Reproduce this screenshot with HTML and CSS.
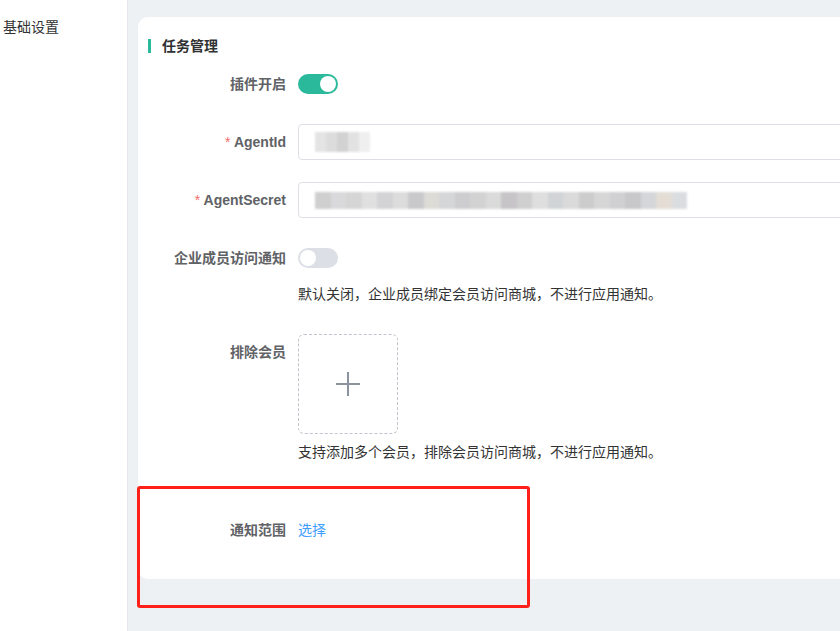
FILE: index.html
```html
<!DOCTYPE html>
<html lang="zh">
<head>
<meta charset="utf-8">
<title>任务管理</title>
<link rel="stylesheet" href="styles.css">
</head>
<body>
<div class="layout">
  <aside class="sidebar">
    <div class="nav-item">基础设置</div>
  </aside>
  <main class="main">
    <section class="card">
      <h2 class="card-title">任务管理</h2>
      <div class="form">
        <div class="form-item">
          <label class="form-label">插件开启</label>
          <div class="form-content">
            <span class="switch is-on"><span class="knob"></span></span>
          </div>
        </div>
        <div class="form-item">
          <label class="form-label"><span class="req">*</span> AgentId</label>
          <div class="form-content">
            <div class="input">
              <span class="redact redact-short">
                <i style="background:#e4e4e4"></i><i style="background:#dcdcdc"></i><i style="background:#d2d2d2"></i><i style="background:#e2e2e2"></i><i style="background:#efefef"></i>
              </span>
            </div>
          </div>
        </div>
        <div class="form-item">
          <label class="form-label"><span class="req">*</span> AgentSecret</label>
          <div class="form-content">
            <div class="input">
              <span class="redact redact-long">
                <i style="background:#cfcfcf"></i><i style="background:#d9d9db"></i><i style="background:#d5d5d5"></i><i style="background:#e0e0e0"></i><i style="background:#d3d3d6"></i><i style="background:#dcdcdc"></i><i style="background:#c9c9cc"></i><i style="background:#dddbd6"></i><i style="background:#d5d6d8"></i><i style="background:#cdcdcf"></i><i style="background:#d2d2d2"></i><i style="background:#dadada"></i><i style="background:#c6c4c6"></i><i style="background:#cfcfcf"></i><i style="background:#dedede"></i><i style="background:#d1d4d7"></i><i style="background:#dadada"></i><i style="background:#cccccc"></i><i style="background:#d6d6d6"></i><i style="background:#d0d0d2"></i><i style="background:#c8c8ca"></i><i style="background:#d4d6d9"></i><i style="background:#e3ddd6"></i><i style="background:#dadde0"></i>
              </span>
            </div>
          </div>
        </div>
        <div class="form-item">
          <label class="form-label">企业成员访问通知</label>
          <div class="form-content">
            <span class="switch"><span class="knob"></span></span>
            <div class="tip">默认关闭，企业成员绑定会员访问商城，不进行应用通知。</div>
          </div>
        </div>
        <div class="form-item">
          <label class="form-label">排除会员</label>
          <div class="form-content">
            <div class="upload">
              <svg class="plus" width="26" height="26" viewBox="0 0 26 26"><path d="M13 1v24M1 13h24" stroke="#8c939d" stroke-width="2" fill="none"/></svg>
            </div>
            <div class="tip">支持添加多个会员，排除会员访问商城，不进行应用通知。</div>
          </div>
        </div>
        <div class="form-item form-item-scope">
          <label class="form-label">通知范围</label>
          <div class="form-content">
            <a class="link" href="#">选择</a>
          </div>
        </div>
      </div>
    </section>
  </main>
</div>
<div class="annotation"></div>
</body>
</html>
```

FILE: styles.css
```css
* { box-sizing: border-box; }
html, body { margin: 0; padding: 0; }
body {
  font-family: "Liberation Sans", "Noto Sans CJK SC", sans-serif;
  font-size: 14px;
  color: #333;
  background: #fff;
  width: 840px;
  height: 631px;
  overflow: hidden;
  position: relative;
}
.layout {
  display: flex;
  height: 631px;
}
.sidebar {
  width: 128px;
  flex: 0 0 128px;
  border-right: 1px solid #e4e7ed;
  background: #fff;
}
.nav-item {
  padding: 17px 0 0 3px;
  line-height: 20px;
  color: #333;
}
.main {
  flex: 1;
  background: #eef1f4;
  padding: 17px 0 0 10px;
  overflow: hidden;
}
.card {
  width: 780px;
  height: 562px;
  background: #fff;
  border-radius: 10px 0 0 10px;
  padding: 19px 0 0 10px;
}
.card-title {
  margin: 0;
  font-size: 14px;
  font-weight: 700;
  color: #303133;
  line-height: 20px;
  padding-left: 14px;
  height: 20px;
  position: relative;
}
.card-title::before {
  content: "";
  position: absolute;
  left: 0;
  top: 3px;
  width: 3px;
  height: 14px;
  background: #2ab99a;
}
.form { margin-top: 10px; margin-left: -10px; }
.form-item {
  display: flex;
  margin-bottom: 22px;
}
.form-item-scope { padding-top: 20px; }
.form-label {
  width: 160px;
  flex: 0 0 160px;
  padding-right: 12px;
  text-align: right;
  line-height: 36px;
  font-weight: 600;
  color: #606266;
}
.req { color: #f56c6c; font-weight: 400; }
.form-content {
  flex: 1;
  min-height: 36px;
}
.switch {
  display: block;
  position: relative;
  width: 40px;
  height: 20px;
  border-radius: 10px;
  background: #dcdfe6;
  margin: 8px 0;
}
.switch .knob {
  position: absolute;
  top: 2px;
  left: 2px;
  width: 16px;
  height: 16px;
  border-radius: 50%;
  background: #fff;
}
.switch.is-on { background: #2ab99a; }
.switch.is-on .knob { left: 22px; }
.tip {
  line-height: 36px;
  color: #333;
}
.input {
  width: 560px;
  height: 36px;
  border: 1px solid #dcdfe6;
  border-radius: 4px;
  background: #fff;
  display: flex;
  align-items: center;
  padding-left: 16px;
}
.redact {
  display: flex;
  filter: blur(1.2px);
}
.redact i {
  display: block;
  width: 9px;
  height: 18px;
}
.redact-short i { height: 20px; width: 11px; }
.redact-long i { width: 15.5px; height: 17px; }
.upload {
  width: 100px;
  height: 100px;
  border: 1px dashed #c0c4cc;
  border-radius: 6px;
  display: flex;
  align-items: center;
  justify-content: center;
}
.link {
  color: #409eff;
  text-decoration: none;
  line-height: 36px;
}
.annotation {
  position: absolute;
  left: 137px;
  top: 486px;
  width: 393px;
  height: 122px;
  border: 3px solid #ff2019;
  border-radius: 3px;
}
```
